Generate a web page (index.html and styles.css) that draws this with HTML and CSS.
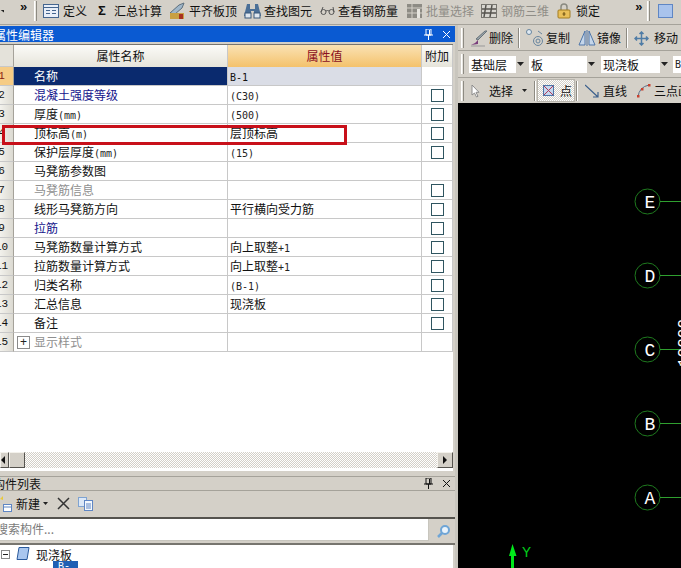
FILE: index.html
```html
<!DOCTYPE html>
<html lang="zh-CN">
<head>
    <meta charset="UTF-8">
    <meta name="viewport" content="width=device-width, initial-scale=1.0">
    <title>属性编辑器</title>
    <link rel="stylesheet" href="styles.css">
</head>
<body>
    <div class="top-bar">
        <span class="tiny-arrow"></span>
        <span class="chevrons first">»</span>
        <span class="grip"></span>
        <div class="tool w-define">
            <svg width="16" height="14" viewBox="0 0 16 14"><rect x=".5" y=".5" width="15" height="13" fill="#e8eef8" stroke="#44658f"/><path d="M1 3.500h14M3 6.500h4M3 9.500h4M9 6.500h4M9 9.500h4" stroke="#44658f"/></svg>
            <span>定义</span>
        </div>
        <div class="tool w-sum"><span class="sigma">Σ</span><span>汇总计算</span></div>
        <div class="tool w-align">
            <svg width="17" height="18" viewBox="0 0 17 18"><path d="M1 11l9-8 5-2-2 5-7 6z" fill="#9fb6c9" stroke="#5d6f7d"/><rect x="1" y="11" width="14" height="6" fill="#c8a043"/><rect x="10" y="12" width="4" height="5" fill="#a8321f"/></svg>
            <span>平齐板顶</span>
        </div>
        <div class="tool w-find">
            <svg width="17" height="16" viewBox="0 0 17 16"><path d="M3 1h3v5h5V1h3l3 12H10V8H7v5H0z" fill="#4a6f97"/><rect x="1" y="10" width="6" height="5" fill="#dfe7ef" stroke="#39587a"/><rect x="10" y="10" width="6" height="5" fill="#dfe7ef" stroke="#39587a"/></svg>
            <span>查找图元</span>
        </div>
        <div class="tool w-view">
            <svg width="15" height="10" viewBox="0 0 15 10"><path d="M1 6a2.500 2.500 0 1 0 5 0 2.500 2.500 0 1 0-5 0zM9 6a2.500 2.500 0 1 0 5 0 2.500 2.500 0 1 0-5 0zM6 5q1.500-1 3 0M1 6l2-5M14 6l-1-5" fill="none" stroke="#555"/></svg>
            <span>查看钢筋量</span>
        </div>
        <div class="tool w-batch off">
            <svg width="17" height="18" viewBox="0 0 17 18"><rect x="1" y="2" width="15" height="14" fill="#8d8b84"/><path d="M1 6h15M1 11h15M6 2v14" stroke="#d4d0c8"/><rect x="11" y="7" width="3" height="9" fill="#e8e6e0"/></svg>
            <span>批量选择</span>
        </div>
        <div class="tool w-three off">
            <svg width="16" height="16" viewBox="0 0 16 16"><rect x=".5" y="1.500" width="15" height="13" fill="#d8d6d0" stroke="#77756f"/><path d="M1 6h14M1 10h14M5 2L3 14M11 2L9 14" stroke="#55534e" stroke-width="1.500"/></svg>
            <span>钢筋三维</span>
        </div>
        <div class="tool w-lock">
            <svg width="14" height="16" viewBox="0 0 14 16"><path d="M4 7V4a3 3 0 0 1 6 0v3" fill="none" stroke="#8a8a80" stroke-width="1.500"/><rect x="1" y="7" width="12" height="8" rx="1" fill="#e9bf58" stroke="#a27c22"/><path d="M7 9v4M5.500 11h3" stroke="#6b4f10"/></svg>
            <span>锁定</span>
        </div>
        <span class="chevrons second">»</span>
        <span class="grip"></span>
        <div class="tool w-layer">
            <svg width="15" height="14" viewBox="0 0 15 14"><rect x=".5" y=".5" width="14" height="13" fill="#a9c3ec" stroke="#5f86c4"/></svg>
        </div>
    </div>

    <div class="workspace">
        <div class="left-col">
            <div class="dock-title active">
                <span class="title-text">属性编辑器</span>
                <span class="dock-pin">
                    <svg width="9" height="11" viewBox="0 0 9 11"><path d="M2 0h5v6H2zM0 6h9M4.500 6v5M5.500 1v5" fill="none" stroke="currentColor"/></svg>
                </span>
                <span class="dock-close">
                    <svg width="9" height="9" viewBox="0 0 9 9"><path d="M1 1l7 7M8 1L1 8" stroke="currentColor"/></svg>
                </span>
            </div>

            <div class="prop-panel">
                <div class="prop-grid">
                    <div class="gutter head"></div>
                    <div class="col-head">属性名称</div>
                    <div class="col-head hot">属性值</div>
                    <div class="col-head extra">附加</div>

                    <div class="gutter current"><span>1</span></div>
                    <div class="name selected">名称</div>
                    <div class="val selected-val"><span class="lat">B-1</span></div>
                    <div class="extra"></div>

                    <div class="gutter"><span>2</span></div>
                    <div class="name blue">混凝土强度等级</div>
                    <div class="val"><span class="lat">(C30)</span></div>
                    <div class="extra"><i class="box"></i></div>

                    <div class="gutter"><span>3</span></div>
                    <div class="name">厚度<span class="lat">(mm)</span></div>
                    <div class="val"><span class="lat">(500)</span></div>
                    <div class="extra"><i class="box"></i></div>

                    <div class="gutter"><span>4</span></div>
                    <div class="name">顶标高<span class="lat">(m)</span></div>
                    <div class="val">层顶标高</div>
                    <div class="extra"><i class="box"></i></div>

                    <div class="gutter"><span>5</span></div>
                    <div class="name">保护层厚度<span class="lat">(mm)</span></div>
                    <div class="val"><span class="lat">(15)</span></div>
                    <div class="extra"><i class="box"></i></div>

                    <div class="gutter"><span>6</span></div>
                    <div class="name">马凳筋参数图</div>
                    <div class="val"></div>
                    <div class="extra"></div>

                    <div class="gutter"><span>7</span></div>
                    <div class="name gray">马凳筋信息</div>
                    <div class="val"></div>
                    <div class="extra"><i class="box"></i></div>

                    <div class="gutter"><span>8</span></div>
                    <div class="name">线形马凳筋方向</div>
                    <div class="val">平行横向受力筋</div>
                    <div class="extra"><i class="box"></i></div>

                    <div class="gutter"><span>9</span></div>
                    <div class="name blue">拉筋</div>
                    <div class="val"></div>
                    <div class="extra"><i class="box"></i></div>

                    <div class="gutter"><span>10</span></div>
                    <div class="name">马凳筋数量计算方式</div>
                    <div class="val">向上取整<span class="lat">+1</span></div>
                    <div class="extra"><i class="box"></i></div>

                    <div class="gutter"><span>11</span></div>
                    <div class="name">拉筋数量计算方式</div>
                    <div class="val">向上取整<span class="lat">+1</span></div>
                    <div class="extra"><i class="box"></i></div>

                    <div class="gutter"><span>12</span></div>
                    <div class="name">归类名称</div>
                    <div class="val"><span class="lat">(B-1)</span></div>
                    <div class="extra"><i class="box"></i></div>

                    <div class="gutter"><span>13</span></div>
                    <div class="name">汇总信息</div>
                    <div class="val">现浇板</div>
                    <div class="extra"><i class="box"></i></div>

                    <div class="gutter"><span>14</span></div>
                    <div class="name">备注</div>
                    <div class="val"></div>
                    <div class="extra"><i class="box"></i></div>

                    <div class="gutter"><span>15</span></div>
                    <div class="name gray has-plus"><i class="plus">+</i><span>显示样式</span></div>
                    <div class="val"></div>
                    <div class="extra"></div>
                </div>
                <div class="red-mark"></div>
                <div class="h-scroll">
                    <span class="scroll-btn left"><i></i></span>
                    <span class="scroll-btn thumb"></span>
                    <span class="scroll-track"></span>
                    <span class="scroll-btn right"><i></i></span>
                </div>
            </div>

            <div class="dock-title plain">
                <span class="title-text">构件列表</span>
                <span class="dock-pin">
                    <svg width="9" height="11" viewBox="0 0 9 11"><path d="M2 0h5v6H2zM0 6h9M4.500 6v5M5.500 1v5" fill="none" stroke="currentColor"/></svg>
                </span>
                <span class="dock-close">
                    <svg width="9" height="9" viewBox="0 0 9 9"><path d="M1 1l7 7M8 1L1 8" stroke="currentColor"/></svg>
                </span>
            </div>
            <div class="list-tools">
                <svg width="12" height="16" viewBox="0 0 12 16"><path d="M0 3l3-3v4z" fill="#e9c93c"/><rect x="3.500" y="8.500" width="8" height="7" fill="#fff" stroke="#5f86c4"/><path d="M4 11h7" stroke="#5f86c4"/></svg>
                <span class="new-label">新建</span>
                <i class="small-caret"></i>
                <svg class="del-icon" width="13" height="13" viewBox="0 0 13 13"><path d="M1 1l11 11M12 1L1 12" stroke="#333" stroke-width="1.500"/></svg>
                <svg width="16" height="14" viewBox="0 0 16 14"><rect x=".5" y=".5" width="8" height="9" fill="#dce8f7" stroke="#7fa3d1"/><rect x="6.500" y="3.500" width="8" height="10" fill="#f4f8fd" stroke="#5f86c4"/><path d="M8 7h5M8 9h5M8 11h5" stroke="#5f86c4"/></svg>
            </div>
            <div class="search-row">
                <div class="search-box">搜索构件...</div>
                <svg class="search-icon" width="15" height="15" viewBox="0 0 15 15"><circle cx="9" cy="6" r="4" fill="#eaf3fb" stroke="#6fa5d6" stroke-width="2"/><path d="M6 9l-4 4" stroke="#6fa5d6" stroke-width="2.500"/></svg>
            </div>
            <div class="tree">
                <div class="tree-row">
                    <i class="minus"></i>
                    <svg width="14" height="14" viewBox="0 0 14 14"><path d="M3 .5h10l-2 12H1z" fill="#a9c6ee" stroke="#2a5a9c"/></svg>
                    <span>现浇板</span>
                </div>
                <div class="tree-row child">
                    <svg width="11" height="11" viewBox="0 0 11 11"><circle cx="5.500" cy="5.500" r="4" fill="#f0d878" stroke="#8a7530"/></svg>
                    <span class="picked">B-1</span>
                </div>
            </div>
        </div>

        <div class="right-col">
            <div class="bar bar-edit">
                <span class="grip"></span>
                <div class="tool t-del">
                    <svg width="18" height="17" viewBox="0 0 18 17"><path d="M17 1L8 10l-2-1 9-8z" fill="#98a2a8" stroke="#68747b"/><path d="M8 10l-3 3-4 2 7-1z" fill="#7a3f7d"/><path d="M1 16h14" stroke="#999"/></svg>
                    <span>删除</span>
                </div>
                <span class="vsep"></span>
                <div class="tool t-copy">
                    <svg width="18" height="18" viewBox="0 0 18 18"><circle cx="3" cy="3" r="2.500" fill="#dfe9f2" stroke="#68859f"/><circle cx="12" cy="12" r="4.500" fill="none" stroke="#68859f"/><circle cx="12" cy="12" r="2" fill="none" stroke="#68859f"/><path d="M12 2l4 3" stroke="#68859f"/></svg>
                    <span>复制</span>
                </div>
                <div class="tool t-mirror">
                    <svg width="18" height="16" viewBox="0 0 18 16"><path d="M7 1L1 15h6zM11 1l6 14h-6z" fill="#c5d6ea" stroke="#4e75a8"/><path d="M9 0v16" stroke="#4e75a8"/></svg>
                    <span>镜像</span>
                </div>
                <span class="vsep"></span>
                <div class="tool t-move">
                    <svg width="15" height="15" viewBox="0 0 15 15"><path d="M7.500 1v13M1 7.500h13M5.500 3l2-2 2 2M5.500 12l2 2 2-2M3 5.500l-2 2 2 2M12 5.500l2 2-2 2" fill="none" stroke="#4f7ca6" stroke-width="1.500"/></svg>
                    <span>移动</span>
                </div>
            </div>
            <div class="bar bar-combo">
                <span class="grip"></span>
                <div class="combo c-floor"><span>基础层</span><i></i></div>
                <div class="combo c-type"><span>板</span><i></i></div>
                <div class="combo c-kind"><span>现浇板</span><i></i></div>
                <div class="combo c-name"><span class="lat">B-1</span></div>
            </div>
            <div class="bar bar-draw">
                <span class="grip"></span>
                <div class="tool d-select">
                    <svg width="9" height="14" viewBox="0 0 9 14"><path d="M1 1v10l2.500-2 2 4 1.500-.7-2-4h3z" fill="#fff" stroke="#8c8c8c"/></svg>
                    <span>选择</span>
                    <i class="small-caret"></i>
                </div>
                <span class="vsep"></span>
                <div class="tool d-point">
                    <svg width="11" height="11" viewBox="0 0 11 11"><rect x=".5" y=".5" width="10" height="10" fill="#c6d8ee" stroke="#4e75a8"/><path d="M1 1l9 9M10 1l-9 9" stroke="#b03a5a"/></svg>
                    <span>点</span>
                </div>
                <span class="vsep"></span>
                <div class="tool d-line">
                    <svg width="14" height="14" viewBox="0 0 14 14"><path d="M0 1l13 12M13 8v5H8" fill="none" stroke="#3b5f8c" stroke-width="1.200"/></svg>
                    <span>直线</span>
                </div>
                <div class="tool d-arc">
                    <svg width="15" height="15" viewBox="0 0 15 15"><path d="M2 14Q3 4 13 2" fill="none" stroke="#5b6f88"/><rect x="1" y="12" width="2.500" height="2.500" fill="#c8412f"/><rect x="5" y="5" width="2.500" height="2.500" fill="#c8412f"/><rect x="12" y="1" width="2.500" height="2.500" fill="#c8412f"/></svg>
                    <span>三点画弧</span>
                </div>
            </div>
            <div class="canvas">
                <svg class="drawing" width="223" height="466" viewBox="458 102 223 466">
                    <g fill="none" stroke="#1f7a1f">
                        <circle cx="647.500" cy="200.500" r="12.500"/>
                        <circle cx="647.500" cy="274.500" r="12.500"/>
                        <circle cx="647.500" cy="348.500" r="12.500"/>
                        <circle cx="647.500" cy="422.500" r="12.500"/>
                        <circle cx="647.500" cy="496.500" r="12.500"/>
                        <path d="M660 200.500h21M660 274.500h21M660 348.500h21M660 422.500h21M660 496.500h21" stroke="#2f9f2f"/>
                    </g>
                    <g class="axis-letters">
                        <text x="650" y="207">E</text>
                        <text x="650" y="281">D</text>
                        <text x="650" y="355">C</text>
                        <text x="650" y="429">B</text>
                        <text x="650" y="503">A</text>
                    </g>
                    <text class="dim" transform="translate(689 366) rotate(-90)">10000</text>
                    <path d="M512.500 543l4 12h-2.500v13h-3v-13H509z" fill="#00e81a"/>
                    <text class="axis-y" x="522" y="556">Y</text>
                </svg>
            </div>
        </div>
    </div>
</body>
</html>
```

FILE: styles.css
```css
* {
    margin: 0;
    padding: 0;
    box-sizing: border-box;
}

html, body {
    width: 681px;
    height: 568px;
    overflow: hidden;
}

body {
    font-family: "Noto Sans CJK SC", sans-serif;
    font-size: 12px;
    color: #111;
    background: #d4d0c8;
    display: flex;
    flex-direction: column;
}

svg {
    flex: none;
    display: block;
}

.lat {
    font-family: "DejaVu Sans Mono", monospace;
    font-size: 10px;
    color: #222;
}

.selected-val .lat {
    color: #111;
}

/* top toolbar */
.top-bar {
    height: 25px;
    flex: none;
    display: flex;
    align-items: center;
    overflow: hidden;
    padding-bottom: 2px;
    border-bottom: 1px solid #a5a29a;
}

.tiny-arrow {
    width: 4px;
    height: 3px;
    flex: none;
    background: #222;
    clip-path: polygon(0 0, 100% 0, 100% 100%);
}

.chevrons {
    flex: none;
    font-family: "Liberation Sans", sans-serif;
    font-size: 13px;
    font-weight: bold;
    line-height: 10px;
    margin-top: -8px;
}

.chevrons.first {
    margin-left: 16px;
    width: 14px;
}

.chevrons.second {
    margin-left: 35px;
    width: 12px;
}

.grip {
    width: 3px;
    height: 20px;
    flex: none;
    border-left: 1px solid #fff;
    border-right: 1px solid #8d8a82;
    background: #e8e6e0;
}

.tool {
    display: flex;
    align-items: center;
    flex: none;
    white-space: nowrap;
    line-height: 16px;
}

.top-bar .tool.w-define { margin-left: 6px; gap: 4px; }
.top-bar .tool.w-sum { margin-left: 11px; gap: 6px; }
.top-bar .tool.w-align { margin-left: 7px; gap: 3px; }
.top-bar .tool.w-find { margin-left: 7px; gap: 3px; }
.top-bar .tool.w-view { margin-left: 8px; gap: 3px; }
.top-bar .tool.w-batch { margin-left: 8px; gap: 3px; }
.top-bar .tool.w-three { margin-left: 7px; gap: 4px; }
.top-bar .tool.w-lock { margin-left: 8px; gap: 5px; }
.top-bar .tool.w-layer { margin-left: 8px; }

.sigma {
    font-family: "Liberation Sans", sans-serif;
    font-size: 13px;
    font-weight: bold;
    width: 10px;
}

.off {
    color: #8f8d87;
}

/* layout */
.workspace {
    flex: 1;
    display: flex;
    min-height: 0;
}

.left-col {
    width: 458px;
    flex: none;
    display: flex;
    flex-direction: column;
    border-right: 3px solid #c9c6be;
    overflow: hidden;
}

.right-col {
    flex: 1;
    min-width: 0;
    display: flex;
    flex-direction: column;
}

/* dock titles */
.dock-title {
    flex: none;
    display: flex;
    align-items: center;
    height: 16px;
    overflow: hidden;
}

.dock-title.active {
    margin-top: 1px;
    background: #0a5ad2;
    color: #fff;
}

.dock-title.plain {
    margin-top: 5px;
    height: 15px;
    border-top: 1px solid #a5a29a;
    border-bottom: 1px solid #a5a29a;
    color: #111;
}

.title-text {
    margin-left: -6px;
    font-size: 12px;
    flex: 1;
}

.dock-title.plain .title-text {
    margin-left: -7px;
}

.dock-pin {
    width: 9px;
    color: inherit;
    margin-right: 9px;
}

.dock-close {
    width: 9px;
    margin-right: 4px;
}

/* property grid */
.prop-panel {
    flex: none;
    height: 427px;
    margin-top: 2px;
    margin-right: 2px;
    background: #fff;
    position: relative;
    display: flex;
    flex-direction: column;
    justify-content: space-between;
    padding-bottom: 3px;
    border-top: 1px solid #77756f;
}

.prop-grid {
    display: grid;
    grid-template-columns: 14px 214px 194px 31px;
    grid-template-rows: 22px repeat(15, 19px);
}

.prop-grid > div {
    overflow: hidden;
    white-space: nowrap;
    line-height: 18px;
    border-bottom: 1px solid #c8c8c8;
    border-right: 1px solid #c8c8c8;
}

/* row numbers are centred on the clipped left edge, as in the real grid */
.prop-grid > .gutter {
    display: flex;
    align-items: center;
    justify-content: center;
    padding-right: 10px;
    background: linear-gradient(90deg, #f2f1ec, #dcdad2);
    font-size: 11px;
    font-family: "Liberation Mono", monospace;
    border-right: 1px solid #a5a29a;
}

.prop-grid > .gutter span {
    flex: none;
}

.prop-grid > .gutter.head {
    background: #e4e2da;
}

.prop-grid > .gutter.current {
    background: #f6cc85;
    color: #8a1c10;
}

.prop-grid > .col-head {
    display: flex;
    align-items: center;
    justify-content: center;
    background: linear-gradient(#fbfbf8, #e6e4da);
    border-bottom: 0;
}

.prop-grid > .col-head.hot {
    background: linear-gradient(#fae2b4, #f4c26c);
    color: #8a0f1e;
}

.prop-grid > .extra {
    display: flex;
    align-items: center;
    justify-content: center;
}

.prop-grid > .name {
    padding-left: 20px;
}

.prop-grid > .name.selected {
    background: #0a2a6e;
    color: #fff;
}

.prop-grid > .name.blue {
    color: #14148c;
}

.prop-grid > .name.gray {
    color: #8f8f8f;
}

.prop-grid > .name.has-plus {
    display: flex;
    align-items: center;
    padding-left: 3px;
}

.prop-grid > .val {
    padding-left: 2px;
}

.prop-grid > .selected-val {
    background: #dadde6;
}

.box {
    width: 13px;
    height: 13px;
    border: 1px solid #2f5560;
    background: #fff;
}

.plus {
    width: 13px;
    height: 13px;
    margin-right: 4px;
    border: 1px solid #8a8a8a;
    color: #222;
    font-style: normal;
    font-family: "Liberation Sans", sans-serif;
    line-height: 10px;
    text-align: center;
}

.red-mark {
    position: absolute;
    left: 2px;
    top: 80px;
    width: 345px;
    height: 20px;
    border: 3px solid #c8101a;
}

/* scrollbar */
.h-scroll {
    height: 16px;
    display: flex;
    background-color: #eceae4;
    background-image: repeating-conic-gradient(#d4d0c8 0 25%, #fff 0 50%);
    background-size: 2px 2px;
}

.scroll-btn {
    width: 16px;
    height: 16px;
    flex: none;
    display: flex;
    align-items: center;
    justify-content: center;
    background: #d4d0c8;
    border: 1px solid;
    border-color: #f4f2ec #55534e #55534e #f4f2ec;
}

.scroll-btn.left {
    width: 9px;
    justify-content: flex-start;
}

.scroll-btn i {
    width: 4px;
    height: 8px;
    background: #111;
}

.scroll-btn.left i {
    clip-path: polygon(100% 0, 0 50%, 100% 100%);
}

.scroll-btn.right i {
    clip-path: polygon(0 0, 100% 50%, 0 100%);
}

.scroll-track {
    flex: 1;
}

/* component list */
.list-tools {
    flex: none;
    height: 28px;
    display: flex;
    align-items: center;
    padding-bottom: 1px;
    border-bottom: 2px solid #55534e;
}

.new-label {
    margin-left: 4px;
}

.small-caret {
    width: 5px;
    height: 3px;
    flex: none;
    margin-left: 3px;
    background: #222;
    clip-path: polygon(0 0, 100% 0, 50% 100%);
}

.del-icon {
    margin: 0 8px 0 9px;
}

.search-row {
    flex: none;
    height: 26px;
    display: flex;
    align-items: center;
    border-bottom: 2px solid #77756f;
}

.search-box {
    width: 433px;
    height: 22px;
    margin-top: -2px;
    margin-left: -4px;
    background: #fff;
    border-bottom: 1px solid #c8c6be;
    border-right: 1px solid #c8c6be;
    color: #7b7b7b;
    line-height: 20px;
}

.search-icon {
    margin-left: 7px;
}

.tree {
    flex: 1;
    margin-right: 2px;
    background: #fff;
    overflow: hidden;
}

.tree-row {
    height: 18px;
    display: flex;
    align-items: center;
    gap: 6px;
    padding-left: 1px;
}

.minus {
    width: 9px;
    height: 9px;
    border: 1px solid #8a8a8a;
    background: linear-gradient(#222, #222) center / 5px 1px no-repeat;
}

.tree-row.child {
    padding-left: 36px;
}

.picked {
    background: #1f5fb4;
    color: #fff;
    padding: 0 5px;
    width: 25px;
    font-family: "Liberation Mono", monospace;
    font-size: 10px;
}

/* right side bars */
.bar {
    flex: none;
    display: flex;
    align-items: center;
    padding-left: 3px;
    white-space: nowrap;
    overflow: hidden;
    border-bottom: 1px solid #a5a29a;
}

.bar-edit { height: 25px; margin-top: 1px; }
.bar-combo { height: 27px; }
.bar-draw { height: 25px; border-bottom: 0; }

.vsep {
    width: 2px;
    height: 20px;
    flex: none;
    border-left: 1px solid #8d8a82;
    border-right: 1px solid #fff;
}

.t-del { margin-left: 6px; gap: 1px; }
.bar-edit .vsep { margin-left: 5px; }
.t-copy { margin-left: 6px; gap: 2px; }
.t-mirror { margin-left: 8px; gap: 1px; }
.t-move { margin-left: 6px; gap: 5px; }

.combo {
    height: 17px;
    flex: none;
    display: flex;
    align-items: center;
    justify-content: space-between;
    background: #fff;
    padding-left: 2px;
}

.combo i {
    width: 9px;
    height: 17px;
    display: flex;
    align-items: center;
    justify-content: center;
    background: #d4d0c8;
}

.combo i::after {
    content: "";
    width: 7px;
    height: 4px;
    background: #222;
    clip-path: polygon(0 0, 100% 0, 50% 100%);
}

.c-floor { width: 56px; margin-left: 5px; }
.c-type { width: 67px; margin-left: 4px; }
.c-kind { width: 68px; margin-left: 5px; }
.c-name { width: 20px; margin-left: 4px; }

.d-select { margin-left: 7px; gap: 9px; }
.d-select .small-caret { margin-left: 0; }
.bar-draw .vsep { margin-left: 1px; }
.d-select + .vsep { margin-left: 7px; }
.d-point {
    height: 23px;
    width: 38px;
    margin-left: 1px;
    padding-left: 5px;
    gap: 6px;
    background-image: repeating-conic-gradient(#d4d0c8 0 25%, #fff 0 50%);
    background-size: 2px 2px;
    border: 1px solid #b8b5ad;
}
.d-line { margin-left: 7px; gap: 4px; }
.d-arc { margin-left: 9px; gap: 3px; }

/* drawing */
.canvas {
    flex: 1;
    background: #000;
    position: relative;
    overflow: hidden;
}

.drawing {
    position: absolute;
    left: 0;
    top: 0;
}

.axis-letters text {
    font-family: "Liberation Mono", monospace;
    font-size: 18px;
    fill: #fff;
    text-anchor: middle;
}

.dim {
    font-family: "Liberation Mono", monospace;
    font-size: 16px;
    fill: #fff;
}

.axis-y {
    font-family: "Liberation Mono", monospace;
    font-size: 15px;
    fill: #00c81a;
}
```
